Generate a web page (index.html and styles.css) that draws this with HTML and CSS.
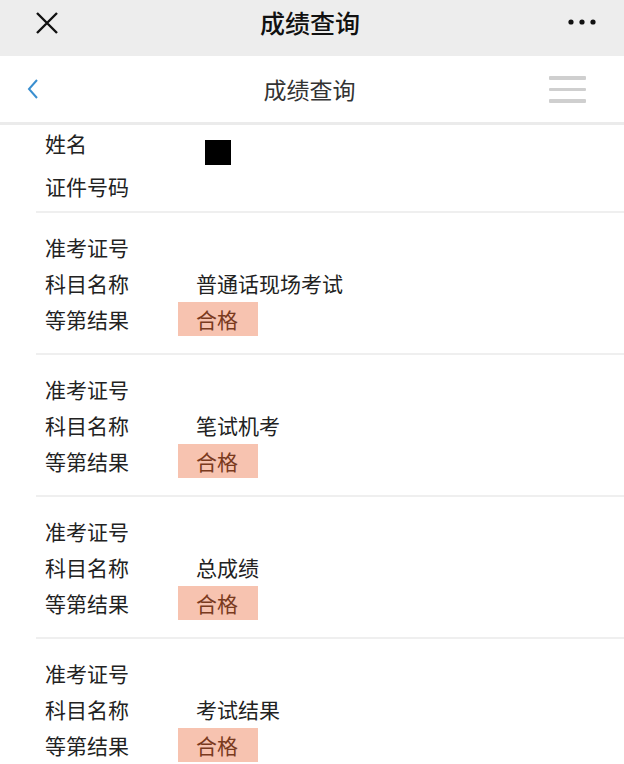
FILE: index.html
```html
<!DOCTYPE html>
<html lang="zh-CN">
<head>
<meta charset="utf-8">
<link rel="stylesheet" href="styles.css">
</head>
<body>
<div class="app">
  <div class="topbar">
    <svg class="close" width="24" height="24" viewBox="0 0 24 24"><path d="M2 2L22 22M22 2L2 22" stroke="#111" stroke-width="2.4" fill="none"/></svg>
    <div class="top-title">成绩查询</div>
    <svg class="more" width="30" height="8" viewBox="0 0 30 8"><circle cx="4" cy="4" r="2.6" fill="#111"/><circle cx="15" cy="4" r="2.6" fill="#111"/><circle cx="26" cy="4" r="2.6" fill="#111"/></svg>
  </div>
  <div class="navbar">
    <svg class="back" width="12" height="22" viewBox="0 0 12 22"><path d="M10 2L2 11L10 20" stroke="#3a8fd0" stroke-width="2" fill="none"/></svg>
    <div class="nav-title">成绩查询</div>
    <div class="menu"><span></span><span></span><span></span></div>
  </div>
  <div class="content">
    <div class="group first">
      <div class="row r1"><div class="label">姓名</div><div class="value"><span class="mask"></span></div></div>
      <div class="row r2"><div class="label">证件号码</div><div class="value"></div></div>
    </div>
    <div class="group">
      <div class="row"><div class="label">准考证号</div><div class="value"></div></div>
      <div class="row"><div class="label">科目名称</div><div class="value">普通话现场考试</div></div>
      <div class="row"><div class="label">等第结果</div><div class="value"><span class="badge">合格</span></div></div>
    </div>
    <div class="group">
      <div class="row"><div class="label">准考证号</div><div class="value"></div></div>
      <div class="row"><div class="label">科目名称</div><div class="value">笔试机考</div></div>
      <div class="row"><div class="label">等第结果</div><div class="value"><span class="badge">合格</span></div></div>
    </div>
    <div class="group">
      <div class="row"><div class="label">准考证号</div><div class="value"></div></div>
      <div class="row"><div class="label">科目名称</div><div class="value">总成绩</div></div>
      <div class="row"><div class="label">等第结果</div><div class="value"><span class="badge">合格</span></div></div>
    </div>
    <div class="group">
      <div class="row"><div class="label">准考证号</div><div class="value"></div></div>
      <div class="row"><div class="label">科目名称</div><div class="value">考试结果</div></div>
      <div class="row"><div class="label">等第结果</div><div class="value"><span class="badge">合格</span></div></div>
    </div>
  </div>
</div>
</body>
</html>
```
FILE: styles.css
```css
* { box-sizing: border-box; }
html, body { margin: 0; padding: 0; }
body {
  width: 624px;
  height: 764px;
  overflow: hidden;
  background: #fff;
  font-family: "Noto Sans CJK SC", "Noto Sans", sans-serif;
  color: #222;
}
.app { display: flex; flex-direction: column; }
.topbar {
  height: 56px;
  background: #ededed;
  display: grid;
  grid-template-columns: 1fr auto 1fr;
  align-items: center;
  padding: 0 27px 0 35px;
}
.close { display: block; margin-top: -11px; }
.more { display: block; margin-top: -12px; justify-self: end; }
.top-title {
  font-size: 25px;
  font-weight: 500;
  color: #111;
  margin-top: -12px;
  margin-left: -12px;
}
.navbar {
  height: 69px;
  background: #fff;
  border-bottom: 3px solid #ebebeb;
  display: grid;
  grid-template-columns: 1fr auto 1fr;
  align-items: center;
  padding: 0 38px 0 27px;
}
.back { display: block; }
.nav-title {
  font-size: 23px;
  color: #333;
  margin-left: 6px;
}
.menu {
  width: 37px;
  display: flex;
  flex-direction: column;
  gap: 8px;
  margin-top: 1px;
  justify-self: end;
}
.menu span {
  display: block;
  height: 3.5px;
  background: #cfcfcf;
  border-radius: 1px;
}
.content { display: flex; flex-direction: column; }
.group {
  margin-left: 36px;
  padding: 16px 0 16px 9px;
  border-top: 2px solid #efefef;
}
.group.first {
  border-top: none;
  padding: 0 0 0 9px;
}
.row {
  height: 36px;
  display: flex;
  align-items: center;
  font-size: 21px;
}
.r1 { height: 36px; }
.r2 { height: 50px; }
.label { width: 151px; color: #222; }
.value { color: #222; display: flex; align-items: center; }
.mask {
  display: block;
  width: 26px;
  height: 25px;
  background: #000;
  margin-left: 9px;
  margin-top: 19px;
}
.badge {
  display: block;
  height: 34px;
  line-height: 34px;
  width: 80px;
  padding-left: 18px;
  margin-left: -18px;
  background: #f7c3b0;
  color: #7a3a1e;
}
```
